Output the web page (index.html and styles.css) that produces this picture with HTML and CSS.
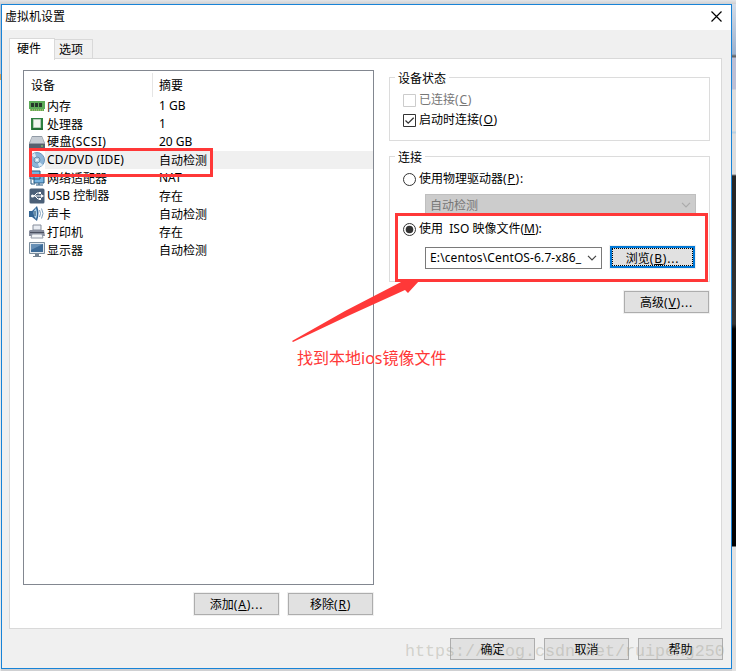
FILE: index.html
```html
<!DOCTYPE html>
<html lang="zh-CN">
<head>
<meta charset="utf-8">
<title>虚拟机设置</title>
<link rel="stylesheet" href="styles.css">
</head>
<body>
<div class="desktop">
<div class="side"></div>
<main class="window">
  <header class="titlebar"><h1>虚拟机设置</h1>
    <svg class="close" width="11" height="11" viewBox="0 0 11 11"><path d="M.5.5l10 10M10.5.5l-10 10" stroke="#000" stroke-width="1.2"/></svg>
  </header>
  <nav class="tabs"><span class="tab active">硬件</span><span class="tab">选项</span></nav>
  <section class="panel">
    <div class="left">
      <div class="list">
        <div class="head"><span class="name">设备</span><span class="low">摘要</span></div>
        <div class="row"><svg class="icon" viewBox="0 0 16 16"><path d="M0 3h16v8h-1v2H1v-2H0z" fill="#5dab58"/><path d="M2 5h3v4H2zM6 5h3v4H6zM10 5h3v4h-3z" fill="#26382a"/><path d="M1 12h14" stroke="#d4c878" stroke-dasharray="1 1"/></svg><span class="name low">内存</span><span>1 GB</span></div>
        <div class="row"><svg class="icon" viewBox="0 0 16 16"><path d="M2 2h12v12H2z" fill="#2f8140"/><path d="M4.500 3.500h7v8h-7z" fill="#f0f4f0" stroke="#b4cdb7"/><path d="M3 13h11" stroke="#175b2b"/></svg><span class="name low">处理器</span><span>1</span></div>
        <div class="row"><svg class="icon" viewBox="0 0 16 16"><path d="M3 2h10l3 7v5H0V9z" fill="#919aa5"/><path d="M3 3h10l2 6H1z" fill="#c6ccd3"/><path d="M0 10h16v4H0z" fill="#56616f"/><path d="M12 12h2" stroke="#8de070"/></svg><span class="name wide">硬盘(SCSI)</span><span>20 GB</span></div>
        <div class="row selected"><svg class="icon" viewBox="0 0 16 16"><circle cx="8" cy="8" r="7.500" fill="#8db5d8" stroke="#6e98bd"/><path d="M8 8L2 3l4-2zM8 8l6 5-4 2z" fill="#d5e7f4"/><circle cx="8" cy="8" r="3" fill="#b9d2e6" stroke="#688eae"/><circle cx="8" cy="8" r="1" fill="#fff"/></svg><span class="name cd">CD/DVD (IDE)</span><span class="low">自动检测</span></div>
        <div class="row"><svg class="icon" viewBox="0 0 16 16"><path d="M1 1h10v8H1zM5 5h10v8H5z" fill="#75b2df" stroke="#25577f"/><path d="M2 10v4h4M7 15h7M10 13v2" stroke="#25577f" fill="none"/></svg><span class="name low">网络适配器</span><span>NAT</span></div>
        <div class="row"><svg class="icon" viewBox="0 0 16 16"><rect width="15" height="15" x=".5" y=".5" rx="1.5" fill="#4b6078"/><path d="M3 8h10M5 8l3-3h2M6 8l3 3h2" fill="none" stroke="#fff"/><circle cx="3.500" cy="8" r="1.500" fill="#fff"/><path d="M12 6l3 2-3 2zM10 4h2v2h-2zM10 10h2v2h-2z" fill="#fff"/></svg><span class="name">USB 控制器</span><span class="low">存在</span></div>
        <div class="row"><svg class="icon" viewBox="0 0 16 16"><path d="M0 5h3l5-5q3 7 0 15l-5-4H0z" fill="#346695"/><path d="M7 2q-5 5 0 11 2-5 0-11" fill="#b6d8ef"/><path d="M6 5v5" stroke="#21445f"/><path d="M10.500 4q2 3.500 0 7M12.500 2.500q3 5 0 10" stroke="#7ea0bd" fill="none"/></svg><span class="name low">声卡</span><span class="low">自动检测</span></div>
        <div class="row"><svg class="icon" viewBox="0 0 16 16"><path d="M4 1h8v5H4z" fill="#e9edf3" stroke="#858d9b"/><path d="M1 6h14l1 6H0V7z" fill="#888e9e"/><path d="M1 8.500h14" stroke="#4a4f60"/><path d="M3 10h10l1 4H2z" fill="#f3f5f8" stroke="#9198a6"/></svg><span class="name low">打印机</span><span class="low">存在</span></div>
        <div class="row"><svg class="icon" viewBox="0 0 16 16"><path d="M.5.5h15v11H.5z" fill="#e2e9ef" stroke="#7b8d9d"/><path d="M2 2h12v8H2z" fill="#3d6b98"/><path d="M2 2h12L2 8z" fill="#668fb5"/><path d="M6 12h4v2h2v1H4v-1h2z" fill="#738291"/></svg><span class="name low">显示器</span><span class="low">自动检测</span></div>
      </div>
      <div class="actions"><button>添加<i>(<u>A</u>)...</i></button><button>移除<i>(<u>R</u>)</i></button></div>
    </div>
    <div class="right">
      <fieldset class="group status"><legend>设备状态</legend>
        <label class="option disabled"><svg width="13" height="13"><path d="M.5.5h12v12H.5z" fill="#fff" stroke="#ccc"/></svg>已连接<i>(<u>C</u>)</i></label>
        <label class="option"><svg width="13" height="13"><path d="M.5.5h12v12H.5z" fill="#fff" stroke="#333"/><path d="M2.500 6.500l2.700 2.700 5.500-5.500" fill="none" stroke="#333" stroke-width="1.300"/></svg>启动时连接<i>(<u>O</u>)</i></label>
      </fieldset>
      <fieldset class="group connection"><legend>连接</legend>
        <label class="option"><svg width="13" height="13"><circle cx="6.500" cy="6.500" r="6" fill="#fff" stroke="#333"/></svg>使用物理驱动器<i>(<u>P</u>):</i></label>
        <div class="combo off"><span class="low">自动检测</span><svg width="10" height="6"><path d="M1 .8l4 4 4-4" fill="none" stroke="#aaa" stroke-width="1.200"/></svg></div>
        <label class="option iso"><svg width="13" height="13"><circle cx="6.500" cy="6.500" r="6" fill="#fff" stroke="#333"/><circle cx="6.500" cy="6.500" r="3.800" fill="#333"/></svg>使用&nbsp; ISO 映像文件(<u>M</u>):</label>
        <div class="file"><div class="combo path"><span>E:\centos\CentOS-6.7-x86_</span><svg width="10" height="6"><path d="M1 .8l4 4 4-4" fill="none" stroke="#444" stroke-width="1.200"/></svg></div><button class="focus"><span>浏览<i>(<u>B</u>)...</i></span></button></div>
      </fieldset>
      <button class="advanced">高级<i>(<u>V</u>)...</i></button>
    </div>
  </section>
  <footer class="footer"><button>确定</button><button>取消</button><button>帮助</button></footer>
</main>
<div class="backdrop"></div>
<div class="mark device-mark"></div>
<div class="mark iso-mark"></div>
<svg class="arrow" width="130" height="65" viewBox="290 280 130 65"><path d="M292 341L345 311 403 281H419L408 293 405 290 350 315 293 342z" fill="#ff3838"/></svg>
<div class="note">找到本地ios镜像文件</div>
<div class="watermark">https://blog.csdn.net/ruipeng250</div>
</div>
</body>
</html>
```

FILE: styles.css
```css
* { box-sizing: border-box; }
body { margin: 0; font: 12px/18px "Noto Sans", "Noto Sans CJK SC", sans-serif; color: #000; background: #d1d4d8; }
i { font-style: normal; letter-spacing: .8px; }
.desktop { position: relative; display: flex; width: 736px; height: 671px; padding-top: 4px; overflow: hidden; background: linear-gradient(#e3e5e8, #cfd0d2 4px, #cfd0d2); }
.side { width: 1px; height: 667px; background: linear-gradient(#b9c6d5 0 70px, #d9a052 70px 76px, #e6e8ea 76px); }
.window { width: 731px; height: 665px; border: 1px solid #1883d7; background: #f0f0f0; }
.backdrop { width: 4px; height: 667px; background: linear-gradient(#d4dce7 0, #9cb1ce 50px, #666 52px 53px, #bcbfd5 54px 85px, #ddd 86px 127px, #b9d1e3 128px 129px, #ddd 130px 170px, #262626 172px 200px, #353535 320px, #020202 325px 542px, #e2e2e2 543px); }
.titlebar { display: flex; justify-content: space-between; height: 25px; padding: 2px 9px 0 3px; background: #fff; }
h1 { margin: 0; font-size: 12px; font-weight: 400; line-height: 20px; }
.close { margin-top: 4px; }
.tabs { display: flex; align-items: flex-end; height: 29px; padding: 7px 7px 0; }
.tab { height: 20px; width: 38px; padding: 1px 4px; border: 1px solid #d9d9d9; border-width: 1px 1px 0 0; }
.tab.active { position: relative; width: 46px; height: 22px; padding: 1px 7px; border-left-width: 1px; background: #fff; margin-bottom: -1px; z-index: 1; }
.panel { display: flex; gap: 15px; width: 713px; height: 571px; margin-left: 7px; margin-top: -1px; padding: 11px 10px 0 13px; border: 1px solid #d9d9d9; background: #fff; }
.left { width: 351px; }
.list { height: 515px; padding-top: 2px; border: 1px solid #828790; }
.head, .row { display: flex; align-items: center; }
.head { height: 24px; padding-left: 7px; }
.head .name { width: 122px; border-right: 1px solid #e5e5e5; height: 24px; line-height: 26px; margin-right: 6px; }
.row { position: relative; height: 18px; padding-left: 5px; line-height: 18px; }
.icon { width: 16px; height: 16px; flex: none; }
.row .name { width: 112px; margin-left: 2px; }
.low { position: relative; top: 1px; }
.row .wide { letter-spacing: .4px; }
.row .cd { letter-spacing: .15px; }
.selected { background: linear-gradient(to right, transparent 21px, #f0f0f0 21px); }
button { width: 85px; height: 22px; padding: 1px 0 0; border: 1px solid #adadad; background: #e1e1e1; font: inherit; color: #000; line-height: 18px; outline: 1px solid #f0f0f0; }
u { text-underline-offset: 1px; }
.actions { display: flex; justify-content: flex-end; gap: 9px; margin: 8px 1px 0 0; }
.right { width: 321px; padding-top: 7px; }
.group { position: relative; margin: 0; padding: 0; width: 321px; border: 1px solid #dcdcdc; }
.group legend { float: left; width: auto; margin: -8px 0 2px 5px; padding: 0 3px; background: #fff; height: 18px; }
.status { height: 64px; }
.connection { height: 126px; margin-top: 15px; }
.option { display: flex; align-items: center; clear: both; height: 20px; margin-left: 13px; }
.option svg { flex: none; margin-right: 3px; }
.disabled { color: #777; }
.combo { display: flex; align-items: center; justify-content: space-between; width: 177px; height: 22px; padding: 0 4px; border: 1px solid #7a7a7a; background: #fff; white-space: nowrap; }
.path span { letter-spacing: .12px; }
.combo.off { width: 271px; margin: 5px 0 0 35px; border-color: #bfbfbf; background: #ccc; color: #777; }
.option.iso { margin-top: 3px; }
.file { display: flex; gap: 8px; margin: 8px 0 0 35px; }
.focus { border: 2px solid #0078d7; padding: 0; margin-top: -1px; }
.focus span { display: block; height: 18px; border: 1px dotted #000; padding-top: 1px; line-height: 18px; }
.advanced { display: block; margin: 9px 0 0 235px; }
.footer { display: flex; justify-content: flex-end; gap: 9px; padding: 9px 8px 0 0; }
.mark { position: absolute; border: 3px solid #ff3838; }
.device-mark { left: 29px; top: 148px; width: 184px; height: 29px; }
.iso-mark { left: 395px; top: 213px; width: 313px; height: 69px; }
.arrow { position: absolute; left: 290px; top: 280px; }
.note { position: absolute; left: 297px; top: 347px; font-size: 16px; line-height: 22px; color: #ff3838; white-space: nowrap; }
.watermark { position: absolute; left: 405px; top: 641px; font: 16.67px/22px "Liberation Mono", monospace; color: rgba(160, 160, 145, .4); white-space: nowrap; }
```
